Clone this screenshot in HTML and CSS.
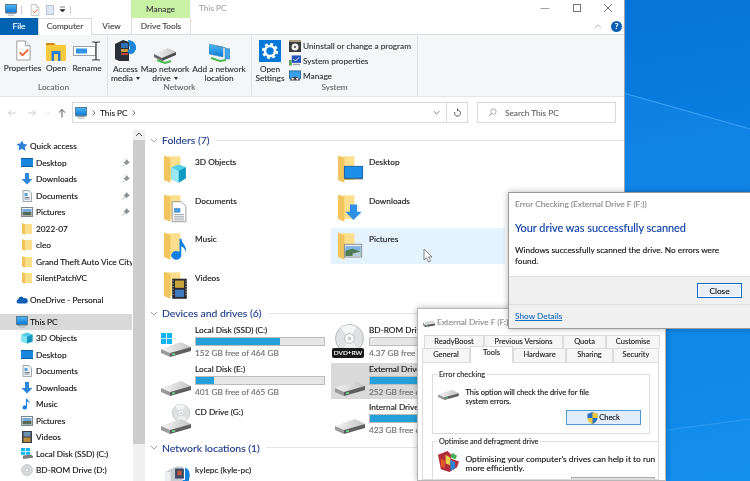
FILE: index.html
```html
<!DOCTYPE html>
<html lang="en">
<head>
<meta charset="utf-8">
<title>This PC</title>
<link rel="stylesheet" href="styles.css">
</head>
<body>
<svg class="defs" width="0" height="0" aria-hidden="true">
  <defs>
    <linearGradient id="scr" x1="0" y1="0" x2="0" y2="1"><stop offset="0" stop-color="#52b8f2"/><stop offset="1" stop-color="#0a78d8"/></linearGradient>
    <linearGradient id="hddtop" x1="0" y1="0" x2="1" y2="0"><stop offset="0" stop-color="#f4f4f4"/><stop offset="1" stop-color="#c4c4c4"/></linearGradient>
    <symbol id="pc" viewBox="0 0 12 12"><rect x=".5" y=".5" width="11" height="8" fill="url(#scr)" stroke="#5b7d96"/><rect x="1" y="9" width="10" height="1" fill="#8fa5b4"/><rect x="3" y="10.500" width="6" height="1.200" fill="#aebcc6"/></symbol>
    <symbol id="star" viewBox="0 0 12 12"><path d="M6 .5l1.700 3.500 3.800.5-2.800 2.600.7 3.900L6 8.700 2.600 10.500l.7-3.900L.5 4l3.800-.5z" fill="#2b7fd4"/></symbol>
    <symbol id="sdesk" viewBox="0 0 12 12"><rect x="0" y="1" width="12" height="9" fill="#1a86e0"/><rect x="0" y="1" width="12" height="1" fill="#0f5fa8"/><rect x="0" y="9" width="12" height="1" fill="#0f5fa8"/></symbol>
    <symbol id="sdown" viewBox="0 0 12 12"><path d="M4 0h4v6h3.500L6 11.500.5 6H4z" fill="#2b86dc"/></symbol>
    <symbol id="sdoc" viewBox="0 0 12 12"><path d="M2 .5h6l2.500 2.500v8.500H2z" fill="#eef1f4" stroke="#8d97a0" stroke-width=".8"/><rect x="3.500" y="3" width="3" height="3" fill="#5aa3dc"/><path d="M3.500 7.500h5M3.500 9h5" stroke="#7c8b98"/></symbol>
    <symbol id="spic" viewBox="0 0 12 12"><rect x=".5" y="1.500" width="11" height="9" fill="#eef3f6" stroke="#7c8791"/><rect x="1.500" y="3" width="9" height="3" fill="#78a9d8"/><rect x="1.500" y="6" width="9" height="3.500" fill="#586a54"/></symbol>
    <symbol id="sfolder" viewBox="0 0 12 12"><path d="M3 1h8v10H3z" fill="#fbe08c"/><path d="M1 0l3 1.500V12l-3-1.500z" fill="#f2c35a"/></symbol>
    <symbol id="pin" viewBox="0 0 8 8"><path d="M4.500 .5L7.500 3.500 6 4 4.500 6 2 3.500 4 2zM2.800 5.200L.5 7.500" fill="#8a8f94" stroke="#8a8f94" stroke-width=".6"/></symbol>
    <symbol id="cloud" viewBox="0 0 12 8"><path d="M2.500 7.500A2.200 2.200 0 0 1 2.200 3.200 3 3 0 0 1 7.800 2.200 2.500 2.500 0 0 1 10 7.500z" fill="#0f5eb4"/></symbol>
    <symbol id="scube" viewBox="0 0 12 12"><path d="M6 .5l5.500 2v7L6 11.500.5 9.500v-7z" fill="#4ecbe8"/><path d="M6 5l5.500-2.500v7L6 11.500z" fill="#1597c0"/><path d="M.5 2.500L6 5v6.500L.5 9.500z" fill="#84e1f2"/></symbol>
    <symbol id="snote" viewBox="0 0 12 12"><path d="M5 .5h1c.3 2 3 2.500 2.800 5.500-.3-1.500-1.400-2.200-2.800-2.500V9.500A2.200 2 0 1 1 5 7.800z" fill="#1281e4"/></symbol>
    <symbol id="sfilm" viewBox="0 0 12 12"><rect x="1" y="0" width="10" height="12" fill="#3b3f45"/><rect x="2.500" y="1" width="7" height="4.500" fill="#6c8fb8"/><rect x="2.500" y="6.500" width="7" height="4.500" fill="#b78d3c"/></symbol>
    <symbol id="shdd" viewBox="0 0 12 12"><path d="M2 6l8-1.500 2 2.500-10 1.500z" fill="#d8d8d8"/><path d="M0 6.500l2 2.500v2L0 9z" fill="#777"/><path d="M2 9l10-1.500v2L2 11z" fill="#555"/><rect x="3" y="9.300" width="1.500" height=".8" fill="#6fe08c"/></symbol>
    <symbol id="swin" viewBox="0 0 12 12"><path d="M0 0h4v3H0zM4.700 0H9v3H4.700zM0 3.700h4v3H0zM4.700 3.700H9v3H4.700z" fill="#16b2ee"/><path d="M2 7.500l8-1 2 1.800-10 1.200zM2 9.500l10-1.200v1.500L2 11z" fill="#7d7d7d"/></symbol>
    <symbol id="sdisc" viewBox="0 0 12 12"><circle cx="6" cy="6" r="5.500" fill="#d7d9da" stroke="#a8acae" stroke-width=".5"/><circle cx="6" cy="6" r="1.500" fill="#fff" stroke="#a8acae" stroke-width=".5"/></symbol>

    <symbol id="bigfolder" viewBox="0 0 34 32"><path d="M3 1h15v26H3z" fill="#fbdf8c"/><path d="M0 0l7 3v27l-7-3z" fill="#f1c45e"/></symbol>
    <symbol id="ovdesk" viewBox="0 0 34 32"><rect x="7" y="12" width="20" height="13" fill="#1c8fe8" stroke="#0f5fa8"/><rect x="7" y="25" width="20" height="1.500" fill="#3a3a3a" opacity=".5"/></symbol>
    <symbol id="ovcube" viewBox="0 0 34 32"><path d="M8 13l8-3 8 3v12l-8 5-8-4z" fill="#52d0ea"/><path d="M16 17l8-4v12l-8 5z" fill="#149ac2"/><path d="M8 13l8 4v13l-8-4z" fill="#9be8f5"/></symbol>
    <symbol id="ovdoc" viewBox="0 0 34 32"><path d="M9 8h10l5 5v17H9z" fill="#fff" stroke="#8f9498"/><rect x="11" y="15" width="7" height="5" fill="#4e9ad8"/><path d="M11 22h11M11 24h11M11 26h11M11 28h11" stroke="#9aa0a6"/></symbol>
    <symbol id="ovdown" viewBox="0 0 34 32"><path d="M13 11h8v8h5L17 28 8 19h5z" fill="#2f8fe2"/></symbol>
    <symbol id="ovnote" viewBox="0 0 34 32"><path d="M17 7h2c1 6 6 7 5 15-1-4-3-6-5-6.500V25a5.500 4.800 0 1 1-2-3.500z" fill="#1180e4"/></symbol>
    <symbol id="ovpic" viewBox="0 0 34 32"><rect x="7" y="13" width="19" height="14" fill="#e9eef1" stroke="#808a91"/><rect x="8" y="15" width="17" height="5" fill="#7eb3e2"/><path d="M8 20l8-2 9 3v5H8z" fill="#4f7b52"/><path d="M16 23l9-2v5h-9z" fill="#b5cfe0"/></symbol>
    <symbol id="ovfilm" viewBox="0 0 34 32"><rect x="9" y="8" width="16" height="22" fill="#25282c"/><rect x="12" y="10" width="10" height="8" fill="#c9a33b"/><rect x="12" y="20" width="10" height="8" fill="#3f78c0"/><path d="M10 10v18M24 10v18" stroke="#ddd" stroke-dasharray="1 2"/></symbol>

    <symbol id="hdd" viewBox="0 0 30 16"><path d="M0 8L20 1l10 5-21 6z" fill="url(#hddtop)"/><path d="M0 8l9 4v4l-9-4z" fill="#9a9a9a"/><path d="M9 12l21-6v4L9 16z" fill="#5f5f5f"/><rect x="11" y="12.500" width="3" height="1.500" fill="#6ce58c" transform="rotate(-16 12 13)"/></symbol>
    <symbol id="winlogo" viewBox="0 0 11 11"><path d="M0 0h5v5H0zM5.800 0H11v5H5.800zM0 5.800h5V11H0zM5.800 5.800H11V11H5.800z" fill="#12b4f2"/></symbol>
    <symbol id="disc" viewBox="0 0 30 30"><circle cx="15" cy="15" r="14.500" fill="#dfe1e2" stroke="#b4b7b9"/><path d="M15 15L6 4A14 14 0 0 1 22 3z" fill="#f5f6f6"/><path d="M15 15l9 11A14 14 0 0 1 8 27z" fill="#eef0f0"/><circle cx="15" cy="15" r="5" fill="#fff" stroke="#b4b7b9"/><circle cx="15" cy="15" r="2" fill="#c9cccd"/></symbol>
    <symbol id="media" viewBox="0 0 28 23"><path d="M1 6l10-5h6v22H1z" fill="#c7cdd2"/><rect x="1" y="6" width="5" height="17" fill="#eef0f2"/><rect x="10" y="3" width="8" height="9" fill="#3b4a66"/><rect x="12" y="5" width="4" height="4" fill="#c15a3a"/><path d="M19 2c3 1 5 4 4 9l-1 5a3 3 0 1 1-3-3z" fill="#1280dc"/></symbol>

    <symbol id="r-props" viewBox="0 0 20 22"><path d="M4 1h9l5 5v15H4z" fill="#fff" stroke="#9b9b9b"/><path d="M13 1v5h5" fill="#eee" stroke="#9b9b9b"/><path d="M7 13l3 3 6-6" fill="none" stroke="#ea5b25" stroke-width="1.800"/></symbol>
    <symbol id="r-open" viewBox="0 0 20 18"><path d="M0 0h8l2 2h10v16H0z" fill="#fbc93c"/><path d="M0 0h8l1 2H0z" fill="#d08a1a"/><rect x="5.500" y="8" width="9" height="6" fill="#2a7fd2"/><rect x="8" y="11" width="4" height="7" fill="#f5d26a"/><rect x="5.500" y="14" width="2.500" height="4" fill="#2a7fd2"/><rect x="12" y="14" width="2.500" height="4" fill="#2a7fd2"/></symbol>
    <symbol id="r-rename" viewBox="0 0 28 20"><rect x=".5" y="5.500" width="22" height="9" fill="#fff" stroke="#9aa0a4"/><rect x="3" y="7.500" width="11" height="5" fill="#2f95e4"/><path d="M19 1h3l1 1 1-1h3M23 2v16M19 19h3l1-1 1 1h3" fill="none" stroke="#3a3a3a" stroke-width="1.200"/></symbol>
    <symbol id="r-media" viewBox="0 0 22 21"><path d="M0 4l8-4 6 2v19H4l-4-2z" fill="#2a2e36"/><rect x="6" y="3" width="7" height="5" fill="#2f6fb4"/><rect x="6" y="9" width="7" height="3" fill="#c49a3a"/><rect x="6" y="13" width="7" height="2" fill="#b94a3a"/><path d="M13 0c5 0 9 4 8 9-1 3-3 5-5 5a2.500 2.500 0 0 1-1-5z" fill="#1d86dc"/></symbol>
    <symbol id="r-map" viewBox="0 0 22 16"><path d="M0 6L14 0l8 4-14 6z" fill="url(#hddtop)"/><path d="M0 6l8 4v3L0 9z" fill="#666"/><path d="M8 10l14-6v3L8 13z" fill="#4d4d4d"/><path d="M3 12l8 3 6-2" fill="none" stroke="#4cb950" stroke-width="2"/></symbol>
    <symbol id="r-add" viewBox="0 0 21 20"><path d="M0 0l14 3v10L0 10z" fill="url(#scr)" stroke="#4f8db5" stroke-width=".6"/><path d="M7 2l14 3v10l-5 0V3.500z" fill="#3fa5e6" stroke="#4f8db5" stroke-width=".6"/><path d="M2 14l9 3 6-1" fill="none" stroke="#4cb950" stroke-width="2"/></symbol>
    <symbol id="r-gear" viewBox="0 0 22 22"><rect width="22" height="22" fill="#0078d7"/><circle cx="11" cy="11" r="5" fill="none" stroke="#fff" stroke-width="2.600"/><circle cx="11" cy="11" r="7" fill="none" stroke="#fff" stroke-width="2.200" stroke-dasharray="3 2.500"/></symbol>
    <symbol id="r-unin" viewBox="0 0 12 12"><rect width="12" height="12" y="0" fill="#3b3b3b"/><rect x="0" y="0" width="12" height="2" fill="#a99b7c"/><circle cx="6" cy="7" r="3.500" fill="#f0f0f0"/><circle cx="6" cy="7" r="1" fill="#3b3b3b"/></symbol>
    <symbol id="r-sys" viewBox="0 0 13 12"><rect x="3" y="0" width="10" height="8" fill="#2452b8"/><path d="M5 4l2 2 4-4" fill="none" stroke="#fff"/><rect x="0" y="5" width="3" height="6" fill="#5fa05a"/><rect x="4" y="9" width="8" height="1.500" fill="#9aa4ac"/></symbol>
    <symbol id="r-man" viewBox="0 0 13 12"><rect x=".5" y=".5" width="12" height="8" fill="#37a0e8" stroke="#2d6d9c"/><path d="M1 11a4 3 0 0 1 11 0z" fill="#444"/><circle cx="4" cy="9" r="1.200" fill="#fff"/><circle cx="9" cy="9" r="1.200" fill="#fff"/></symbol>
    <symbol id="defrag" viewBox="0 0 22 22"><path d="M0 4l10-4 4 4v4l8 3-2 6-8 5-9-3z" fill="#b22c3a"/><path d="M8 4l5 3v8l-5-2z" fill="#e9d04a"/><path d="M13 9l5 3v6l-5 3z" fill="#2b84d6"/><path d="M15 2l5 3-2 4-5-3z" fill="#3fb354"/><path d="M3 8l4 2v8l-4-2z" fill="#e05a2a"/></symbol>
    <symbol id="shield" viewBox="0 0 12 13"><path d="M6 0l5.500 2v4c0 3.500-2.500 5.800-5.500 7C3 11.800.5 9.500.5 6V2z" fill="#2a6fc4"/><path d="M6 0l5.500 2v4.500H6zM6 6.500v6.500C3 11.800.5 9.500.5 6.500z" fill="#f6c83a"/></symbol>
  </defs>
</svg>

<div class="desktop">
  <svg class="streaks" viewBox="0 0 750 481" aria-hidden="true">
    <polygon points="620,92 750,129 750,481 620,481" fill="#2a9cf5" opacity=".18"/>
    <polyline points="620,92 750,129" fill="none" stroke="#3aa4f4" stroke-width="1"/>
    <polygon points="660,431 750,419 750,481 660,481" fill="#2a9cf5" opacity=".14"/>
    <polyline points="660,431 750,419" fill="none" stroke="#2f9df2" stroke-width="1"/>
  </svg>

  <section class="explorer">
    <header class="titlebar">
      <div class="qat">
        <svg class="q-pc"><use href="#pc"/></svg>
        <i class="q-sep"></i>
        <svg class="q-doc"><use href="#r-props"/></svg>
        <i class="q-page"></i>
        <svg class="q-drop" viewBox="0 0 7 7"><path d="M1 1h5M1 3.500h5l-2.500 2.500z" fill="#222" stroke="#222" stroke-width=".6"/></svg>
        <i class="q-sep q-sep2"></i>
      </div>
      <div class="ctx-head">Manage</div>
      <div class="win-title">This PC</div>
      <div class="win-ctrls">
        <svg class="ctl" viewBox="0 0 12 12"><path d="M1.500 6.500h9" stroke="#a5a5a5"/></svg>
        <svg class="ctl" viewBox="0 0 12 12"><rect x="2.500" y="2.500" width="7" height="7" fill="none" stroke="#777"/></svg>
        <svg class="ctl" viewBox="0 0 12 12"><path d="M2 2l8 8M10 2l-8 8" stroke="#777"/></svg>
      </div>
    </header>

    <nav class="tabs">
      <div class="tab tab-file">File</div>
      <div class="tab tab-active">Computer</div>
      <div class="tab tab-view">View</div>
      <div class="tab tab-ctx">Drive Tools</div>
      <div class="tab-right">
        <svg class="collapse" viewBox="0 0 10 6"><path d="M1 5l4-4 4 4" fill="none" stroke="#aaa"/></svg>
        <span class="help">?</span>
      </div>
    </nav>

    <div class="ribbon">
      <div class="group group-location">
        <div class="rb"><svg class="rb-i i-props"><use href="#r-props"/></svg><span>Properties</span></div>
        <div class="rb"><svg class="rb-i i-open"><use href="#r-open"/></svg><span>Open</span></div>
        <div class="rb"><svg class="rb-i i-rename"><use href="#r-rename"/></svg><span>Rename</span></div>
        <div class="group-label">Location</div>
      </div>
      <div class="group group-network">
        <div class="rb"><svg class="rb-i i-media"><use href="#r-media"/></svg><span>Access<br>media <b class="caret"></b></span></div>
        <div class="rb"><svg class="rb-i i-map"><use href="#r-map"/></svg><span>Map network<br>drive <b class="caret"></b></span></div>
        <div class="rb"><svg class="rb-i i-add"><use href="#r-add"/></svg><span>Add a network<br>location</span></div>
        <div class="group-label">Network</div>
      </div>
      <div class="group group-system">
        <div class="rb"><svg class="rb-i i-gear"><use href="#r-gear"/></svg><span>Open<br>Settings</span></div>
        <ul class="rb-list">
          <li><svg><use href="#r-unin"/></svg>Uninstall or change a program</li>
          <li><svg><use href="#r-sys"/></svg>System properties</li>
          <li><svg><use href="#r-man"/></svg>Manage</li>
        </ul>
        <div class="group-label">System</div>
      </div>
    </div>

    <div class="navbar">
      <div class="nav-btns">
        <svg viewBox="0 0 10 10"><path d="M9 5H1.500M4.500 2L1.500 5l3 3" fill="none" stroke="#cfcfcf"/></svg>
        <svg viewBox="0 0 10 10"><path d="M1 5h7.500M5.500 2l3 3-3 3" fill="none" stroke="#cfcfcf"/></svg>
        <svg class="nav-mini" viewBox="0 0 10 10"><path d="M2 4l3 3 3-3" fill="none" stroke="#cfcfcf"/></svg>
        <svg viewBox="0 0 10 10"><path d="M5 9.500V1.500M1.800 4.700L5 1.500l3.200 3.200" fill="none" stroke="#555"/></svg>
      </div>
      <div class="address">
        <svg class="addr-pc"><use href="#pc"/></svg>
        <svg class="crumb" viewBox="0 0 6 8"><path d="M1.500 1.500L4 4 1.500 6.500" fill="none" stroke="#777"/></svg>
        <span>This PC</span>
        <svg class="crumb" viewBox="0 0 6 8"><path d="M1.500 1.500L4 4 1.500 6.500" fill="none" stroke="#777"/></svg>
        <svg class="addr-down" viewBox="0 0 10 6"><path d="M1 1l4 4 4-4" fill="none" stroke="#666" stroke-width="1.200"/></svg>
        <div class="refresh"><svg viewBox="0 0 10 10"><path d="M5 2.500A3.300 3.300 0 1 1 2 4.500M5 .5v3" fill="none" stroke="#555" stroke-width="1.100"/></svg></div>
      </div>
      <div class="search">
        <svg viewBox="0 0 10 10"><circle cx="6" cy="4" r="3" fill="none" stroke="#888" stroke-width=".8"/><path d="M3.800 6L1 9" stroke="#888"/></svg>
        <span>Search This PC</span>
      </div>
    </div>

    <div class="main">
      <aside class="sidebar">
        <div class="tree">
          <div class="row lv1"><svg><use href="#star"/></svg>Quick access</div>
          <div class="row lv2"><svg><use href="#sdesk"/></svg>Desktop<svg class="pin"><use href="#pin"/></svg></div>
          <div class="row lv2"><svg><use href="#sdown"/></svg>Downloads<svg class="pin"><use href="#pin"/></svg></div>
          <div class="row lv2"><svg><use href="#sdoc"/></svg>Documents<svg class="pin"><use href="#pin"/></svg></div>
          <div class="row lv2"><svg><use href="#spic"/></svg>Pictures<svg class="pin"><use href="#pin"/></svg></div>
          <div class="row lv2"><svg><use href="#sfolder"/></svg>2022-07</div>
          <div class="row lv2"><svg><use href="#sfolder"/></svg>cleo</div>
          <div class="row lv2"><svg><use href="#sfolder"/></svg>Grand Theft Auto Vice City</div>
          <div class="row lv2"><svg><use href="#sfolder"/></svg>SilentPatchVC</div>
          <div class="row lv1 gap-a"><svg><use href="#cloud"/></svg>OneDrive - Personal</div>
          <div class="row lv1 gap-b row-sel"><svg><use href="#pc"/></svg>This PC</div>
          <div class="row lv2"><svg><use href="#scube"/></svg>3D Objects</div>
          <div class="row lv2"><svg><use href="#sdesk"/></svg>Desktop</div>
          <div class="row lv2"><svg><use href="#sdoc"/></svg>Documents</div>
          <div class="row lv2"><svg><use href="#sdown"/></svg>Downloads</div>
          <div class="row lv2"><svg><use href="#snote"/></svg>Music</div>
          <div class="row lv2"><svg><use href="#spic"/></svg>Pictures</div>
          <div class="row lv2"><svg><use href="#sfilm"/></svg>Videos</div>
          <div class="row lv2"><svg><use href="#swin"/></svg>Local Disk (SSD) (C:)</div>
          <div class="row lv2"><svg><use href="#sdisc"/></svg>BD-ROM Drive (D:)</div>
        </div>
        <div class="scrollbar">
          <svg class="sb-up" viewBox="0 0 8 5"><path d="M1 4l3-3 3 3" fill="none" stroke="#555"/></svg>
          <div class="sb-thumb"></div>
        </div>
      </aside>

      <div class="content">
        <div class="section">
          <h2 class="sec-head"><svg viewBox="0 0 10 6"><path d="M1 1l4 4 4-4" fill="none" stroke="#888"/></svg><span>Folders (7)</span><i></i></h2>
          <div class="tiles">
            <div class="tile"><svg class="big"><use href="#bigfolder"/><use href="#ovcube"/></svg><div class="t-text"><span>3D Objects</span></div></div>
            <div class="tile"><svg class="big"><use href="#bigfolder"/><use href="#ovdesk"/></svg><div class="t-text"><span>Desktop</span></div></div>
            <div class="tile"><svg class="big"><use href="#bigfolder"/><use href="#ovdoc"/></svg><div class="t-text"><span>Documents</span></div></div>
            <div class="tile"><svg class="big"><use href="#bigfolder"/><use href="#ovdown"/></svg><div class="t-text"><span>Downloads</span></div></div>
            <div class="tile"><svg class="big"><use href="#bigfolder"/><use href="#ovnote"/></svg><div class="t-text"><span>Music</span></div></div>
            <div class="tile tile-hover"><svg class="big"><use href="#bigfolder"/><use href="#ovpic"/></svg><div class="t-text"><span>Pictures</span></div>
              <svg class="cursor" viewBox="0 0 10 15"><path d="M1 1v11l2.500-2.300 2 4.300 2-1-2-4h3.500z" fill="#fff" stroke="#666" stroke-width=".8"/></svg>
            </div>
            <div class="tile"><svg class="big"><use href="#bigfolder"/><use href="#ovfilm"/></svg><div class="t-text"><span>Videos</span></div></div>
          </div>
        </div>

        <div class="section">
          <h2 class="sec-head"><svg viewBox="0 0 10 6"><path d="M1 1l4 4 4-4" fill="none" stroke="#888"/></svg><span>Devices and drives (6)</span><i></i></h2>
          <div class="tiles">
            <div class="tile drive"><div class="d-icon"><svg class="logo"><use href="#winlogo"/></svg><svg class="hdd"><use href="#hdd"/></svg></div><div class="t-text"><span>Local Disk (SSD) (C:)</span><div class="bar"><div class="fill fill-c"></div></div><small>152 GB free of 464 GB</small></div></div>
            <div class="tile drive"><div class="d-icon"><svg class="dvd"><use href="#disc"/></svg><span class="dvd-label">DVD+RW</span></div><div class="t-text"><span>BD-ROM Drive</span><div class="bar"></div><small>4.37 GB free of 4.37 GB</small></div></div>
            <div class="tile drive"><div class="d-icon"><svg class="hdd"><use href="#hdd"/></svg></div><div class="t-text"><span>Local Disk (E:)</span><div class="bar"><div class="fill fill-e"></div></div><small>401 GB free of 465 GB</small></div></div>
            <div class="tile drive tile-sel"><div class="d-icon"><svg class="hdd"><use href="#hdd"/></svg></div><div class="t-text"><span>External Drive F (F:)</span><div class="bar"><div class="fill fill-f"></div></div><small>252 GB free of 465 GB</small></div></div>
            <div class="tile"><div class="d-icon"><svg class="cd"><use href="#disc"/></svg><svg class="hdd"><use href="#hdd"/></svg></div><div class="t-text"><span>CD Drive (G:)</span></div></div>
            <div class="tile drive"><div class="d-icon"><svg class="hdd"><use href="#hdd"/></svg></div><div class="t-text"><span>Internal Drive (H:)</span><div class="bar"><div class="fill fill-f"></div></div><small>423 GB free of 931 GB</small></div></div>
          </div>
        </div>

        <div class="section">
          <h2 class="sec-head"><svg viewBox="0 0 10 6"><path d="M1 1l4 4 4-4" fill="none" stroke="#888"/></svg><span>Network locations (1)</span><i></i></h2>
          <div class="tiles">
            <div class="tile"><svg class="big"><use href="#media"/></svg><div class="t-text"><span>kylepc (kyle-pc)</span></div></div>
          </div>
        </div>
      </div>
    </div>
  </section>

  <section class="props">
    <header class="props-title"><svg><use href="#shdd"/></svg>External Drive F (F:)</header>
    <div class="ptabs ptabs-top">
      <div class="ptab">ReadyBoost</div><div class="ptab">Previous Versions</div><div class="ptab">Quota</div><div class="ptab">Customise</div>
    </div>
    <div class="ptabs ptabs-bot">
      <div class="ptab">General</div><div class="ptab ptab-on">Tools</div><div class="ptab">Hardware</div><div class="ptab">Sharing</div><div class="ptab">Security</div>
    </div>
    <div class="ppanel">
      <fieldset class="pbox pbox-err">
        <legend>Error checking</legend>
        <div class="pbox-body">
          <svg class="pbox-i"><use href="#hdd"/></svg>
          <p class="p-err">This option will check the drive for file<br>system errors.</p>
        </div>
        <div class="pbtn-row"><button class="pbtn pbtn-on" type="button"><svg><use href="#shield"/></svg>Check</button></div>
      </fieldset>
      <fieldset class="pbox">
        <legend>Optimise and defragment drive</legend>
        <div class="pbox-body">
          <svg class="pbox-i pbox-i2"><use href="#defrag"/></svg>
          <p class="p-opt">Optimising your computer's drives can help it to run<br>more efficiently.</p>
        </div>
        <div class="pbtn-row"><button class="pbtn pbtn-opt" type="button">Optimise</button></div>
      </fieldset>
    </div>
  </section>

  <section class="dialog">
    <div class="dlg-title">Error Checking (External Drive F (F:))</div>
    <div class="dlg-body">
      <h1>Your drive was successfully scanned</h1>
      <p>Windows successfully scanned the drive. No errors were found.</p>
    </div>
    <div class="dlg-actions"><button class="dlg-btn" type="button">Close</button></div>
    <div class="dlg-foot"><a href="#details">Show Details</a></div>
  </section>
</div>
</body>
</html>
```

FILE: styles.css
```css
* { box-sizing: border-box; }
html, body { margin: 0; padding: 0; }
body { width: 750px; height: 481px; overflow: hidden; font-family: "Lato", "Noto Sans", sans-serif; font-size: 8.280px; line-height: 12px; color: #111; -webkit-text-stroke: .12px currentColor; }
.defs { position: absolute; }
svg { display: block; flex: none; }

.desktop { position: relative; width: 750px; height: 481px; overflow: hidden; background: linear-gradient(170deg, #046cce 0%, #0a7fe2 45%, #0a8aec 100%); filter: blur(.25px); }
.streaks { position: absolute; inset: 0; width: 750px; height: 481px; }

/* explorer */
.explorer { position: absolute; left: 0; top: 0; width: 625px; height: 481px; display: flex; flex-direction: column; background: #fff; border-right: 1px solid #9aa4ad; }
.titlebar { height: 18px; flex: none; display: flex; position: relative; }
.qat { width: 131px; display: flex; align-items: center; padding: 1px 0 0 5px; }
.q-pc { width: 12px; height: 12px; }
.q-sep { width: 1px; height: 8px; background: #c9c9c9; margin-left: 4px; }
.q-sep2 { margin-left: 4px; }
.q-doc { width: 11px; height: 12px; margin-left: 7px; }
.q-page { width: 8px; height: 10px; background: #dce6f4; border: 1px solid #b7c3d6; margin-left: 6px; }
.q-drop { width: 7px; height: 7px; margin-left: 5px; }
.ctx-head { width: 59px; height: 18px; background: #c9f1a4; text-align: center; line-height: 19px; color: #3c3c3c; }
.win-title { margin-left: 9px; line-height: 16px; color: #a5a5a5; }
.win-ctrls { margin-left: auto; width: 85px; display: flex; padding: 2px 10px 0 0; justify-content: space-between; }
.ctl { width: 12px; height: 12px; }

.tabs { height: 17px; flex: none; display: flex; border-bottom: 1px solid #dadbdc; }
.tab { height: 17px; line-height: 16px; text-align: center; color: #444; }
.tab-file { width: 38px; background: #0063b1; color: #fff; }
.tab-active { width: 54px; border: 1px solid #dadbdc; border-bottom: 0; background: #fff; line-height: 15px; }
.tab-view { width: 39px; }
.tab-ctx { width: 60px; border-left: 1px solid #dadbdc; border-right: 1px solid #dadbdc; }
.tab-right { margin-left: auto; display: flex; align-items: center; padding-right: 2px; }
.collapse { width: 8px; height: 5px; margin-right: 9px; }
.help { width: 11px; height: 11px; border-radius: 50%; background: #0a5fb4; color: #fff; font-size: 8px; font-weight: 700; line-height: 11px; text-align: center; }

.ribbon { height: 62px; flex: none; display: flex; background: #f5f6f7; border-bottom: 1px solid #e4e5e6; }
.group { height: 60px; display: grid; align-items: start; grid-template-rows: 46px 14px; border-right: 1px solid #dfe0e1; margin-top: 1px; }
.group-location { width: 108px; grid-template-columns: 45px 22px 40px; }
.group-network { width: 144px; grid-template-columns: 35px 44px 64px; }
.group-system { width: 166px; grid-template-columns: 36px 129px; }
.group-label { grid-column: 1 / -1; text-align: center; color: #6a6a6a; line-height: 12px; margin-top: -1px; }
.rb { height: 46px; display: flex; flex-direction: column; align-items: center; text-align: center; color: #333; white-space: nowrap; line-height: 9px; padding-top: 4px; }
.rb-i { width: 22px; height: 22px; margin-bottom: 3px; }
.i-props { width: 19px; height: 21px; }
.i-open { width: 20px; height: 18px; margin: 3px 0 3px; }
.i-rename { width: 28px; height: 20px; margin: 1px 0 3px; }
.i-media { height: 21px; margin: 0 0 4px; }
.i-map { height: 16px; margin: 8px 0 1px; width: 22px; }
.i-add { height: 20px; width: 21px; margin: 4px 0 1px; }
.i-gear { margin: 0 0 3px; }
.caret { display: inline-block; width: 0; height: 0; border-left: 2.500px solid transparent; border-right: 2.500px solid transparent; border-top: 3px solid #333; vertical-align: middle; margin-left: 1px; }
.rb-list { list-style: none; margin: 0; padding: 4px 0 0 1px; display: flex; flex-direction: column; gap: 3px; height: 46px; white-space: nowrap; color: #333; }
.rb-list li { display: flex; align-items: center; height: 12px; gap: 2px; }
.rb-list svg { width: 12px; height: 12px; }

.navbar { height: 33px; flex: none; display: flex; align-items: flex-start; padding: 5px 0 0 7px; }
.nav-btns { width: 65px; display: flex; align-items: center; height: 21px; }
.nav-btns svg { width: 10px; height: 10px; margin-right: 10px; }
.nav-btns svg.nav-mini { margin: 0 6px 0 -3px; width: 7px; }
.address { width: 396px; height: 21px; border: 1px solid #d9d9d9; display: flex; align-items: center; padding-left: 2px; color: #222; }
.addr-pc { width: 12px; height: 12px; }
.crumb { width: 6px; height: 8px; margin: 0 3px 0 4px; }
.crumb + span { margin-left: 0; }
.address span + .crumb { margin-left: 3px; }
.addr-down { width: 7px; height: 5px; margin-left: auto; margin-right: 6px; }
.refresh { width: 21px; height: 19px; border-left: 1px solid #d9d9d9; display: flex; align-items: center; justify-content: center; }
.refresh svg { width: 9px; height: 9px; }
.search { width: 139px; height: 21px; border: 1px solid #d9d9d9; margin-left: 9px; display: flex; align-items: center; padding-left: 10px; color: #666; }
.search svg { width: 9px; height: 9px; margin-right: 8px; }

.main { flex: 1; display: flex; min-height: 0; }
.sidebar { width: 145px; display: flex; }
.tree { width: 132px; padding-top: 8px; overflow: hidden; }
.row { height: 16.500px; display: flex; align-items: center; white-space: nowrap; color: #111; }
.row svg { width: 12px; height: 12px; }
.lv1 { padding-left: 16px; }
.lv1 svg { margin-right: 2px; }
.lv2 { padding-left: 21px; }
.lv2 svg { margin-right: 3px; }
.row svg.pin { width: 8px; height: 8px; margin: 0 2px 0 auto; }
.gap-a { margin-top: 5px; }
.gap-b { margin-top: 5.500px; }
.row-sel { background: #d9d9d9; }
.scrollbar { width: 12px; margin-left: 1px; background: #f0f0f0; padding-top: 1px; }
.sb-up { width: 8px; height: 5px; margin: 1px auto 3px; }
.sb-thumb { height: 304px; background: #cdcdcd; }

.content { flex: 1; padding: 1px 0 0 12px; overflow: hidden; }
.section { padding-bottom: 1.500px; }
.sec-head { height: 18px; margin: 0 0 0 -7px; display: flex; align-items: center; font-weight: 400; font-size: 10.400px; color: #1e3c8c; white-space: nowrap; }
.sec-head svg { width: 8px; height: 5px; margin-right: 4px; }
.sec-head i { flex: 1; height: 1px; background: #e5e5e5; margin-left: 6px; }
.tiles { display: grid; grid-template-columns: 174px 174px; grid-auto-rows: 36px; row-gap: 2.500px; margin-top: 2px; }
.tile { position: relative; display: flex; padding-left: 7px; color: #111; }
.big { width: 31px; height: 32px; margin-top: 3px; }
.t-text { padding-top: 5px; display: flex; flex-direction: column; white-space: nowrap; min-width: 0; }
.tile-hover { background: #e5f3ff; }
.tile-sel { background: #d9d9d9; }
.cursor { position: absolute; left: 92px; top: 20px; width: 10px; height: 15px; }

.drive .t-text { padding-top: 0; width: 130px; }
.d-icon { position: relative; width: 31px; height: 36px; }
.hdd { position: absolute; left: -3px; bottom: 3px; width: 30px; height: 16px; }
.logo { position: absolute; left: -3px; top: 9px; width: 11px; height: 11px; }
.dvd { position: absolute; left: -3px; top: 0; width: 29px; height: 29px; }
.dvd-label { position: absolute; left: -6px; top: 24px; width: 32px; height: 10px; background: #1a1a1a; color: #fff; font-size: 6.500px; line-height: 10px; text-align: center; border-radius: 2px; }
.cd { position: absolute; left: 8px; top: 3px; width: 18px; height: 18px; }
.bar { height: 9px; margin: 1px 0 1px; background: #e6e6e6; border: 1px solid #bcbcbc; }
.fill { height: 7px; background: #26a0da; }
.fill-c { width: 66%; }
.fill-e { width: 14%; }
.fill-f { width: 46%; }
small { font-size: 8.280px; color: #6d6d6d; line-height: 12px; }

/* properties */
.props { position: absolute; left: 417px; top: 308px; width: 249px; height: 173px; background: #fff; border: 1px solid #b8b8b8; box-shadow: 0 0 6px rgba(0, 0, 0, .3); display: flex; flex-direction: column; font-size: 7.500px; }
.props-title { flex: none; height: 26px; display: flex; align-items: center; gap: 2px; padding: 0 0 0 5px; color: #8d8d8d; font-size: 8.250px; }
.props-title svg { width: 12px; height: 12px; }
.ptabs { flex: none; display: grid; height: 13px; margin: 0 6px 0 5px; }
.ptabs-top { grid-template-columns: 60px 79px 43px 54px; margin-left: 6px; background: #f6f6f6; }
.ptabs-bot { height: 14px; grid-template-columns: 48px 43px 53px 47px 46px; margin-left: 4px; }
.ptab { border: 1px solid #dcdcdc; border-bottom: 0; text-align: center; line-height: 12px; background: #f6f6f6; color: #222; }
.ptab-on { background: #fff; margin-top: -2px; height: 17px; position: relative; z-index: 1; }
.ppanel { margin: 0 6px 0 4px; flex: 1; min-height: 0; overflow: hidden; border: 1px solid #dcdcdc; padding: 7px 8px 0 9px; background: #fff; }
.pbox { margin: 0; padding: 0 8px 0 0; border: 1px solid #dcdcdc; position: relative; }
.pbox-err { height: 63.500px; margin-bottom: 3.500px; }
.pbox legend { margin-left: 4px; padding: 0 2px; line-height: 9px; color: #222; font-size: 7.300px; }
.pbox-body { display: flex; padding-left: 5px; }
.pbox-i { width: 21px; height: 11px; margin: 10px 6.500px 0 0; }
.pbox-i2 { height: 21px; margin: 5px 6.500px 0 0; }
.pbox p { margin: 8.500px 0 0; line-height: 9.300px; color: #111; white-space: nowrap; }
.p-err { font-size: 7.400px; }
.p-opt { font-size: 8.400px; }
.pbtn-row { display: flex; justify-content: flex-end; margin-top: 4px; }
.pbtn { font: inherit; height: 15px; padding: 0; display: flex; align-items: center; justify-content: center; gap: 1px; color: #111; line-height: 12px; }
.pbtn svg { width: 11px; height: 12px; }
.pbtn-on { width: 75px; background: #e1eefa; border: 1px solid #4d9ad8; }
.pbtn-opt { width: 84px; background: #e1e1e1; border: 1px solid #adadad; }

/* dialog */
.dialog { position: absolute; left: 508px; top: 192px; width: 243px; height: 137px; background: #fff; border: 1px solid #9b9b9b; box-shadow: 0 0 6px rgba(0, 0, 0, .3); display: flex; flex-direction: column; }
.dlg-title { flex: none; padding: 5px 0 0 6px; height: 21px; color: #8a8a8a; }
.dlg-body { flex: none; height: 62px; padding: 0 6px; }
.dlg-body h1 { margin: 0; font-weight: 400; font-size: 10.900px; line-height: 14px; padding-top: 7px; box-sizing: content-box; color: #0a3ca8; white-space: nowrap; }
.dlg-body p { margin: 9.500px 0 0; line-height: 11px; color: #111; width: 210px; }
.dlg-actions { flex: none; height: 29px; background: #f0f0f0; border-top: 1px solid #dfdfdf; border-bottom: 1px solid #dfdfdf; display: flex; justify-content: flex-end; align-items: center; padding-right: 8px; }
.dlg-btn { font: inherit; width: 45px; height: 15px; padding: 0; background: #e8eef4; border: 1px solid #0a6cc8; box-shadow: inset 0 0 0 1px #fff; color: #111; line-height: 12px; }
.dlg-foot { flex: 1; background: #f0f0f0; padding: 5px 0 0 6px; }
.dlg-foot a { color: #1a6fc4; text-decoration: underline; }
```
